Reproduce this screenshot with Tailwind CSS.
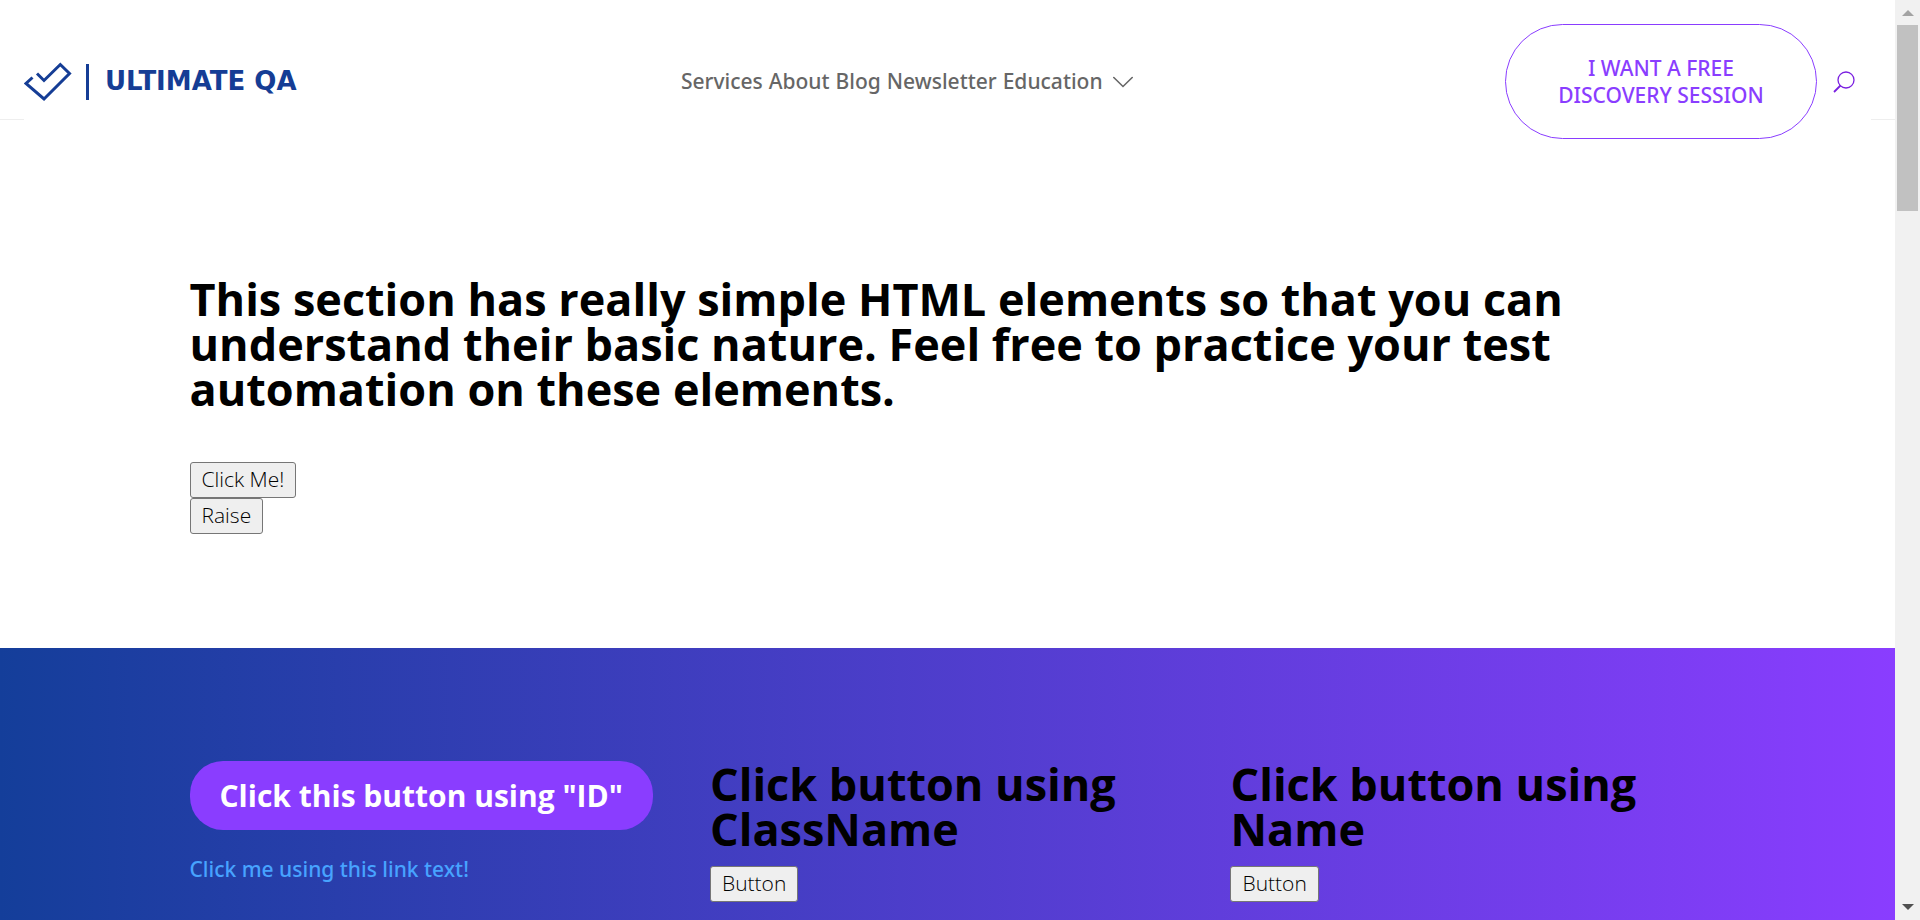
<!DOCTYPE html>
<html lang="en">
<head>
<meta charset="utf-8">
<title>Ultimate QA</title>
<script src="https://cdn.jsdelivr.net/npm/@tailwindcss/browser@4"></script>
</head>
<body class="flex min-h-screen bg-white font-['Open_Sans','Noto_Sans',sans-serif] text-[21px] leading-[27px] text-black">
<div class="flex min-w-0 flex-1 flex-col">
  <header class="relative flex items-center justify-between p-6">
    <span class="absolute left-0 top-[119px] h-px w-6 bg-[#eeeeee]"></span>
    <span class="absolute right-0 top-[119px] h-px w-6 bg-[#eeeeee]"></span>
    <a href="#" class="flex items-center text-[#153d95]" aria-label="Ultimate QA">
      <svg class="h-10 w-12" viewBox="0 0 48 40" fill="none" stroke="currentColor" stroke-width="3">
        <path d="M13 11.500 20 18.500 36.300 2.500 45.500 11.500 20 37 2 21.500 8.500 15.500"/>
      </svg>
      <span class="ml-[14px] h-9 w-[3px] bg-[#153d95]"></span>
      <span class="ml-4 whitespace-nowrap font-['DejaVu_Sans',sans-serif] text-[26px] font-bold">ULTIMATE QA</span>
    </a>
    <nav class="flex items-center gap-[6px] pl-3 font-['Noto_Sans','Open_Sans',sans-serif] font-medium text-[#666666]">
      <a href="#">Services</a>
      <a href="#">About</a>
      <a href="#">Blog</a>
      <a href="#">Newsletter</a>
      <a href="#" class="flex items-center gap-[10px]">Education
        <svg class="h-5 w-5" viewBox="0 0 20 20" fill="none" stroke="currentColor" stroke-width="1.600" stroke-linecap="round"><path d="M.8 5.500 10 14.500 19.200 5.500"/></svg>
      </a>
    </nav>
    <div class="flex items-center">
      <a href="#" class="flex h-[115px] w-[312px] items-center justify-center rounded-full border border-[#8a3dff] text-center font-['Noto_Sans','Open_Sans',sans-serif] font-medium text-[#8a3dff]">I WANT A FREE<br>DISCOVERY SESSION</a>
      <button type="button" aria-label="Search" class="mx-4 text-[#7a1fe0]">
        <svg class="h-[22px] w-[22px]" viewBox="0 0 22 22" fill="none" stroke="currentColor" stroke-width="1.300"><circle cx="13" cy="9" r="8"/><path d="M7.500 14.500 1 21" stroke-width="1.800"/></svg>
      </button>
    </div>
  </header>
  <main class="flex flex-1 flex-col">
    <section class="mx-auto w-4/5 pb-[114px] pt-[113px]">
      <h1 class="text-[45px] font-bold leading-[45px]">This section has really simple HTML elements so that you can understand their basic nature. Feel free to practice your test automation on these elements.</h1>
      <div class="mt-[51px] flex flex-col items-start">
        <button type="button" class="h-9 rounded-[3px] border border-[#767676] bg-[#efefef] px-[11px] pb-0.5 font-light leading-8">Click Me!</button>
        <button type="button" class="h-9 rounded-[3px] border border-[#767676] bg-[#efefef] px-[11px] pb-0.5 font-light leading-8">Raise</button>
      </div>
    </section>
    <section class="flex-1 bg-linear-[90deg,#143e9a,#8a3dff]">
      <div class="mx-auto grid w-4/5 grid-cols-3 gap-x-[3%] pt-[113px]">
        <div class="flex flex-col items-start">
          <button type="button" class="h-[69px] whitespace-nowrap rounded-[33px] bg-[#8a3dff] px-[30px] text-[30px] font-bold text-white">Click this button using "ID"</button>
          <a href="#" class="mt-[26px] font-['Noto_Sans','Open_Sans',sans-serif] font-medium text-[#47a3ff]">Click me using this link text!</a>
        </div>
        <div class="flex flex-col items-start">
          <h2 class="text-[45px] font-bold leading-[45px]">Click button using ClassName</h2>
          <button type="button" class="mt-[15px] h-9 rounded-[3px] border border-[#767676] bg-[#efefef] px-[11px] pb-0.5 font-light leading-8">Button</button>
        </div>
        <div class="flex flex-col items-start">
          <h2 class="text-[45px] font-bold leading-[45px]">Click button using Name</h2>
          <button type="button" class="mt-[15px] h-9 rounded-[3px] border border-[#767676] bg-[#efefef] px-[11px] pb-0.5 font-light leading-8">Button</button>
        </div>
      </div>
    </section>
  </main>
</div>
<aside class="sticky top-0 flex h-screen w-[25px] shrink-0 flex-col items-center justify-between bg-[#f1f1f1]" aria-hidden="true">
  <div class="flex w-full flex-col items-center">
    <svg class="h-[25px] w-[12px]" viewBox="0 0 12 25"><path d="M0 16 6 10 12 16Z" fill="#a3a3a3"/></svg>
    <div class="h-[186px] w-[21px] bg-[#c1c1c1]"></div>
  </div>
  <svg class="h-[25px] w-[12px]" viewBox="0 0 12 25"><path d="M0 9 6 15 12 9Z" fill="#505050"/></svg>
</aside>
</body>
</html>
